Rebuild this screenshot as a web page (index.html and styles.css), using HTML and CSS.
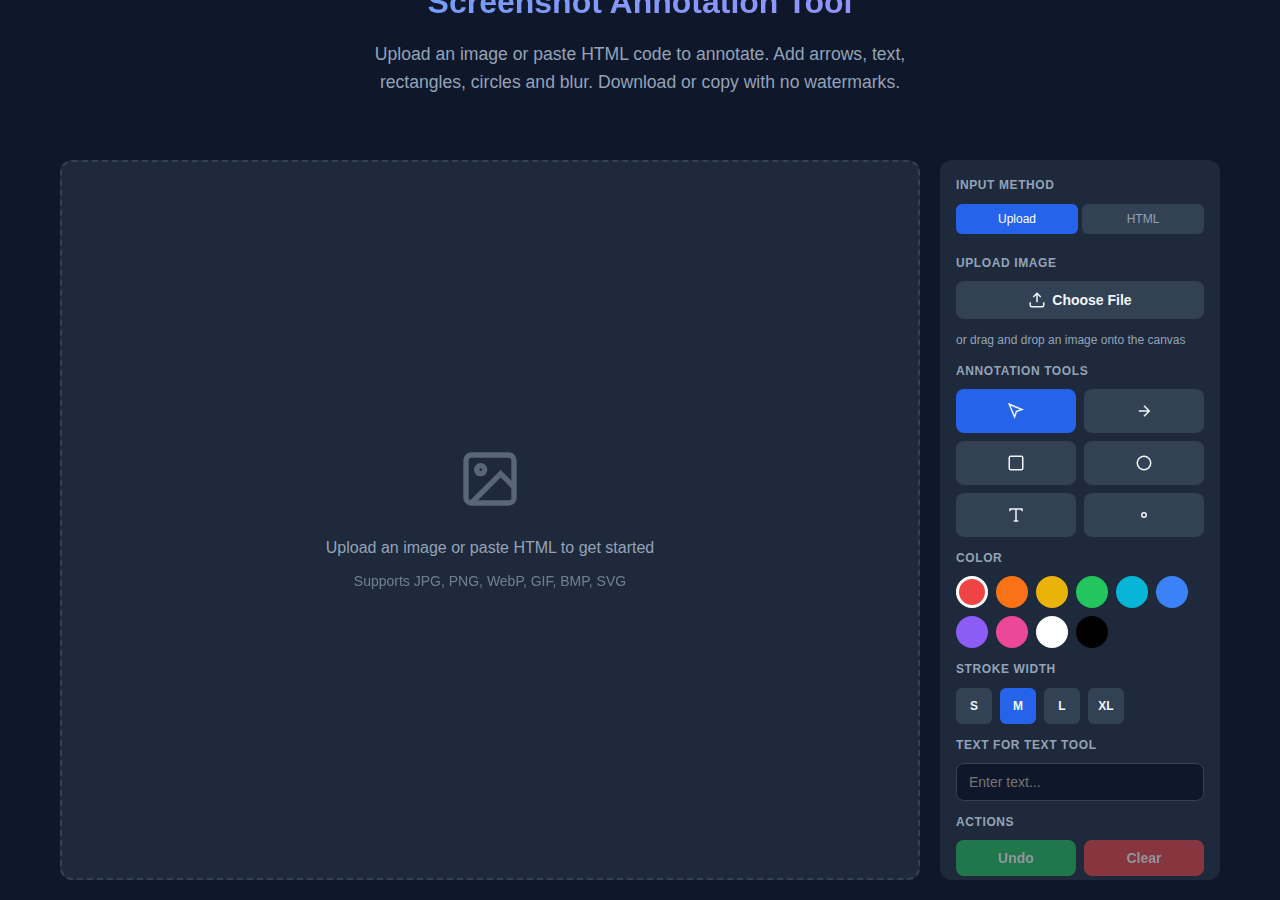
FILE: index.html
```html
<!DOCTYPE html>
<html lang="en">

<head>
  <meta charset="UTF-8">
  <meta name="viewport" content="width=device-width, initial-scale=1.0">
  <title>Screenshot Annotation Tool</title>
  <link rel="stylesheet" href="styles.css">
</head>

<body>
  <main class="tool-page">
    <header class="hero">
      <h1>Screenshot Annotation Tool</h1>
      <p>Upload an image or paste HTML code to annotate. Add arrows, text, rectangles, circles and blur. Download or copy with no watermarks.</p>
    </header>

    <div class="editor">
      <div class="canvas-area">
        <svg class="placeholder-icon" viewBox="0 0 24 24" fill="none" stroke="currentColor" stroke-width="2">
          <rect x="3" y="3" width="18" height="18" rx="2" />
          <circle cx="8.5" cy="8.5" r="1.5" />
          <path d="M21 15l-5-5L5 21" />
        </svg>
        <p class="placeholder-text">Upload an image or paste HTML to get started</p>
        <p class="placeholder-hint">Supports JPG, PNG, WebP, GIF, BMP, SVG</p>
      </div>

      <aside class="sidebar">
        <section class="group group-input">
          <h3>Input Method</h3>
          <div class="tabs">
            <button class="tab active">Upload</button>
            <button class="tab">HTML</button>
          </div>
        </section>

        <section class="group group-upload">
          <h3>Upload Image</h3>
          <button class="file-btn">
            <svg width="18" height="18" viewBox="0 0 24 24" fill="none" stroke="currentColor" stroke-width="2">
              <path d="M21 15v4a2 2 0 0 1-2 2H5a2 2 0 0 1-2-2v-4" />
              <path d="M17 8l-5-5-5 5M12 3v12" />
            </svg>
            Choose File
          </button>
          <p class="hint">or drag and drop an image onto the canvas</p>
        </section>

        <section class="group">
          <h3>Annotation Tools</h3>
          <div class="tools">
            <button class="tool active" title="Select">
              <svg viewBox="0 0 24 24"><path d="M3 3l7.07 16.97 2.51-7.39 7.39-2.51L3 3z" /></svg>
            </button>
            <button class="tool" title="Arrow">
              <svg viewBox="0 0 24 24"><path d="M5 12h14M12 5l7 7-7 7" /></svg>
            </button>
            <button class="tool" title="Rectangle">
              <svg viewBox="0 0 24 24"><rect x="3" y="3" width="18" height="18" rx="2" /></svg>
            </button>
            <button class="tool" title="Circle">
              <svg viewBox="0 0 24 24"><circle cx="12" cy="12" r="9" /></svg>
            </button>
            <button class="tool" title="Text">
              <svg viewBox="0 0 24 24"><path d="M4 7V4h16v3M9 20h6M12 4v16" /></svg>
            </button>
            <button class="tool" title="Blur">
              <svg viewBox="0 0 24 24"><circle cx="12" cy="12" r="3" /></svg>
            </button>
          </div>
        </section>

        <section class="group">
          <h3>Color</h3>
          <div class="colors">
            <button class="color red active"></button>
            <button class="color orange"></button>
            <button class="color yellow"></button>
            <button class="color green"></button>
            <button class="color cyan"></button>
            <button class="color blue"></button>
            <button class="color purple"></button>
            <button class="color pink"></button>
            <button class="color white"></button>
            <button class="color black"></button>
          </div>
        </section>

        <section class="group">
          <h3>Stroke Width</h3>
          <div class="strokes">
            <button class="stroke">S</button>
            <button class="stroke active">M</button>
            <button class="stroke">L</button>
            <button class="stroke">XL</button>
          </div>
        </section>

        <section class="group">
          <h3>Text for Text Tool</h3>
          <input class="text-input" type="text" placeholder="Enter text...">
        </section>

        <section class="group">
          <h3>Actions</h3>
          <div class="actions">
            <button class="action undo" disabled>Undo</button>
            <button class="action clear" disabled>Clear</button>
          </div>
        </section>
      </aside>
    </div>
  </main>
</body>

</html>
```
FILE: styles.css
```css
* {
  margin: 0;
  padding: 0;
  box-sizing: border-box;
}
body {
  font-family: "Liberation Sans", Arial, sans-serif;
  background: #0f172a;
  color: #f1f5f9;
  line-height: 1.6;
  height: 900px;
  overflow: hidden;
}
button,
input {
  font-family: inherit;
}
.tool-page {
  display: flow-root;
  padding: 0 60px;
}
.hero {
  display: flow-root;
  height: 160.4px;
  text-align: center;
}
.hero h1 {
  margin-top: -24px;
  margin-bottom: 12px;
  font-size: 32px;
  line-height: 52px;
  background: linear-gradient(135deg, #60a5fa, #a78bfa);
  -webkit-background-clip: text;
  background-clip: text;
  color: transparent;
}
.hero p {
  max-width: 600px;
  margin: 0 auto;
  font-size: 17.6px;
  line-height: 28px;
  color: #94a3b8;
}
.editor {
  display: grid;
  grid-template-columns: 1fr 280px;
  gap: 20px;
  height: 720px;
}
.canvas-area {
  display: flex;
  flex-direction: column;
  align-items: center;
  justify-content: center;
  background: #1e293b;
  border: 2px dashed #334155;
  border-radius: 12px;
  color: #94a3b8;
}
.placeholder-icon {
  width: 64px;
  height: 64px;
  margin-bottom: 24px;
  opacity: 0.5;
}
.placeholder-text {
  font-size: 16px;
  line-height: 26px;
}
.placeholder-hint {
  margin-top: 8px;
  font-size: 14px;
  line-height: 24px;
  opacity: 0.7;
}
.sidebar {
  display: flex;
  flex-direction: column;
  gap: 12px;
  padding: 16px;
  overflow: hidden;
  background: #1e293b;
  border-radius: 12px;
}
.group h3 {
  margin-bottom: 8px;
  font-size: 12px;
  line-height: 1.6;
  letter-spacing: 0.6px;
  text-transform: uppercase;
  color: #94a3b8;
}
.tabs {
  display: flex;
  gap: 4px;
}
.tab {
  flex: 1;
  height: 30px;
  border: none;
  border-radius: 6px;
  background: #334155;
  color: #94a3b8;
  font-size: 12px;
}
.tab.active {
  background: #2563eb;
  color: white;
}
.group-upload {
  margin-top: 8px;
}
.file-btn {
  display: flex;
  align-items: center;
  justify-content: center;
  gap: 6px;
  width: 100%;
  height: 38px;
  border: none;
  border-radius: 8px;
  background: #334155;
  color: #f1f5f9;
  font-size: 14px;
  font-weight: 600;
}
.hint {
  margin-top: 12px;
  font-size: 12px;
  line-height: 1.6;
  color: #94a3b8;
}
.tools {
  display: grid;
  grid-template-columns: 1fr 1fr;
  gap: 8px;
}
.tool {
  display: flex;
  align-items: center;
  justify-content: center;
  height: 44px;
  border: none;
  border-radius: 8px;
  background: #334155;
  color: #f1f5f9;
}
.tool svg {
  width: 18px;
  height: 18px;
  fill: none;
  stroke: currentColor;
  stroke-width: 2;
}
.tool.active,
.stroke.active {
  background: #2563eb;
}
.colors {
  display: flex;
  flex-wrap: wrap;
  gap: 8px;
}
.color {
  width: 32px;
  height: 32px;
  border: none;
  border-radius: 50%;
}
.color.active {
  border: 3px solid white;
}
.red { background: #ef4444; }
.orange { background: #f97316; }
.yellow { background: #eab308; }
.green { background: #22c55e; }
.cyan { background: #06b6d4; }
.blue { background: #3b82f6; }
.purple { background: #8b5cf6; }
.pink { background: #ec4899; }
.white { background: #ffffff; }
.black { background: #000000; }
.strokes {
  display: flex;
  gap: 8px;
}
.stroke {
  width: 36px;
  height: 36px;
  border: none;
  border-radius: 6px;
  background: #334155;
  color: #f1f5f9;
  font-size: 12px;
  font-weight: 600;
}
.text-input {
  display: block;
  width: 100%;
  height: 38px;
  padding: 0 12px;
  border: 1px solid #334155;
  border-radius: 8px;
  background: #0f172a;
  color: #f1f5f9;
  font-size: 14px;
}
.actions {
  display: grid;
  grid-template-columns: 1fr 1fr;
  gap: 8px;
}
.action {
  height: 36px;
  border: none;
  border-radius: 8px;
  color: white;
  font-size: 14px;
  font-weight: 600;
  opacity: 0.5;
}
.undo {
  background: #22c55e;
}
.clear {
  background: #ef4444;
}
```
